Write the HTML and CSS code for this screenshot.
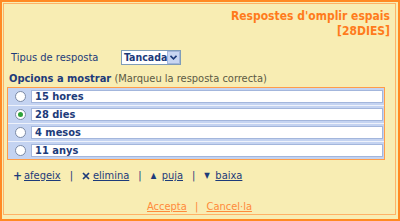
FILE: index.html
```html
<!DOCTYPE html>
<html lang="ca">
<head>
    <meta charset="UTF-8" />
    <title>Respostes d'omplir espais</title>
    <link rel="stylesheet" href="styles.css">
</head>
<body>

    <div class="frame">
        <div class="panel">
            <h1 class="title">Respostes d'omplir espais<br>[28DIES]</h1>

            <div class="field-row">
                <span class="field-label">Tipus de resposta</span>
                <div class="select">
                    <span class="select-value">Tancada</span>
                    <span class="select-arrow">
                        <svg width="7" height="5" viewBox="0 0 7 5"><path d="M0.5 0.8 L3.5 3.8 L6.5 0.8" fill="none" stroke="#1d3b7a" stroke-width="1.6"/></svg>
                    </span>
                </div>
            </div>

            <div class="section-label">
                <b>Opcions a mostrar</b> <span class="hint">(Marqueu la resposta correcta)</span>
            </div>

            <div class="options">
                <div class="option">
                    <span class="radio"></span>
                    <div class="answer">15 hores</div>
                </div>
                <div class="option">
                    <span class="radio checked"></span>
                    <div class="answer">28 dies</div>
                </div>
                <div class="option">
                    <span class="radio"></span>
                    <div class="answer">4 mesos</div>
                </div>
                <div class="option">
                    <span class="radio"></span>
                    <div class="answer">11 anys</div>
                </div>
            </div>

            <div class="toolbar">
                <span class="tool"><span class="tool-icon">+</span><a href="#">afegeix</a></span>
                <span class="sep">|</span>
                <span class="tool">
                    <span class="tool-icon">
                        <svg width="8" height="8" viewBox="0 0 8 8"><path d="M1 1 L7 7 M7 1 L1 7" stroke="#1d3b7a" stroke-width="1.7"/></svg>
                    </span>
                    <a href="#">elimina</a>
                </span>
                <span class="sep">|</span>
                <span class="tool"><span class="tool-icon small">&#x25B2;</span><a href="#">puja</a></span>
                <span class="sep">|</span>
                <span class="tool"><span class="tool-icon small">&#x25BC;</span><a href="#">baixa</a></span>
            </div>

            <div class="actions">
                <a href="#">Accepta</a>
                <span class="sep">|</span>
                <a href="#">Cancel·la</a>
            </div>
        </div>
    </div>

</body>
</html>
```

FILE: styles.css
```css
* {
    margin: 0;
    padding: 0;
    box-sizing: border-box;
}

body {
    width: 400px;
    height: 221px;
    font-family: 'DejaVu Sans Condensed', 'DejaVu Sans', sans-serif;
    font-size: 11px;
    color: #1d3b7a;
    background-color: #f8edb3;
    overflow: hidden;
}

.frame {
    height: 221px;
    border: 2px solid #ff8a24;
    padding: 1px;
}

.panel {
    height: 212px;
    margin-right: 1px;
    border: 1px solid #ffb266;
    display: flex;
    flex-direction: column;
}

.title {
    font-size: 12px;
    font-weight: bold;
    line-height: 15px;
    color: #ff7b1c;
    text-align: right;
    padding: 5px 5px 0 0;
}

.field-row {
    display: flex;
    align-items: center;
    margin-top: 11px;
    padding-left: 7px;
}

.field-label {
    width: 110px;
}

.select {
    display: flex;
    align-items: stretch;
    width: 60px;
    height: 15px;
    background-color: #fff;
    border: 1px solid #7f9db9;
}

.select-value {
    flex: 1;
    font-weight: bold;
    font-size: 10.5px;
    line-height: 13px;
    padding-left: 2px;
    white-space: nowrap;
}

.select-arrow {
    width: 13px;
    flex-shrink: 0;
    display: flex;
    align-items: center;
    justify-content: center;
    background-color: #c8d6f2;
    border: 1px solid #fff;
    outline: 1px solid #a3b6dc;
    outline-offset: -1px;
}

.section-label {
    margin-top: 7px;
    padding-left: 5px;
    line-height: 13px;
}

.hint {
    color: #5c5a44;
}

.options {
    width: 378px;
    margin: 2px 0 0 3px;
    border: 1px solid #ff9d4a;
    background-color: #eef2fb;
}

.option {
    display: flex;
    align-items: center;
    height: 18px;
    padding: 0 1px 0 7px;
    background-color: #c4d3f1;
    border-bottom: 1px solid #eef2fb;
}

.option:last-child {
    border-bottom: none;
    height: 17px;
}

.radio {
    width: 11px;
    height: 11px;
    border-radius: 50%;
    border: 1px solid #7b8aa6;
    background-color: #fff;
    display: flex;
    align-items: center;
    justify-content: center;
    margin-right: 5px;
}

.radio.checked::after {
    content: "";
    width: 5px;
    height: 5px;
    border-radius: 50%;
    background-color: #2fa33a;
}

.answer {
    flex: 1;
    height: 13px;
    background-color: #fff;
    border: 1px solid #a3b6dc;
    font-weight: bold;
    line-height: 11px;
    padding-left: 3px;
}

.toolbar {
    display: flex;
    align-items: center;
    margin-top: 10px;
    padding-left: 9px;
    line-height: 12px;
}

.tool {
    display: flex;
    align-items: center;
}

.tool-icon {
    display: flex;
    align-items: center;
    font-weight: bold;
    font-size: 12px;
    width: 10px;
    margin-right: 1px;
}

.tool-icon.small {
    font-size: 8px;
}

.toolbar a {
    color: #1d3b7a;
}

.toolbar .sep {
    color: #1d3b7a;
    margin: 0 9px;
}

.actions {
    margin-top: auto;
    padding-bottom: 1px;
    text-align: center;
    line-height: 13px;
    color: #ff8a3a;
}

.actions a {
    color: #ff8a3a;
}

.actions .sep {
    margin: 0 5px;
}
```
